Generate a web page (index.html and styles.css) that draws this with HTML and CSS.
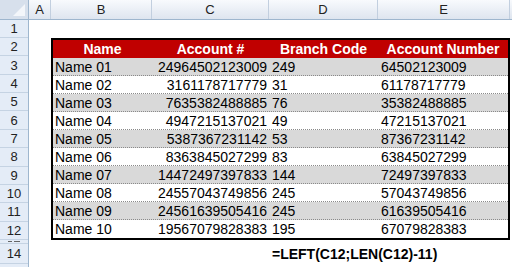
FILE: index.html
```html
<!DOCTYPE html>
<html lang="en">
<head>
    <meta charset="UTF-8">
    <meta name="viewport" content="width=device-width, initial-scale=1.0">
    <title>Account numbers - LEFT formula</title>
    <link rel="stylesheet" href="styles.css">
</head>
<body>
    <div class="sheet">
        <!-- Column headings -->
        <div class="col-heads">
            <div class="corner">
                <svg width="12" height="12" viewBox="0 0 12 12"><polygon points="12,0 12,12 0,12" fill="#f3f6fa"/></svg>
            </div>
            <div class="col-head col-a">A</div>
            <div class="col-head col-b">B</div>
            <div class="col-head col-c">C</div>
            <div class="col-head col-d">D</div>
            <div class="col-head col-e">E</div>
            <div class="col-head col-f"></div>
        </div>

        <div class="sheet-body">
            <!-- Row headings -->
            <div class="row-heads">
                <div class="row-head row-first">1</div>
                <div class="row-head">2</div>
                <div class="row-head">3</div>
                <div class="row-head">4</div>
                <div class="row-head">5</div>
                <div class="row-head">6</div>
                <div class="row-head">7</div>
                <div class="row-head">8</div>
                <div class="row-head">9</div>
                <div class="row-head">10</div>
                <div class="row-head">11</div>
                <div class="row-head">12</div>
                <!-- row 13 is hidden, only a sliver of its label shows -->
                <div class="row-head row-hidden"></div>
                <div class="row-head row-last">14</div>
                <div class="row-head row-rest"></div>
            </div>

            <div class="cells">
                <div class="blank-row"></div>

                <div class="accounts">
                    <div class="acc-row acc-head">
                        <div>Name</div>
                        <div>Account #</div>
                        <div>Branch Code</div>
                        <div>Account Number</div>
                    </div>
                    <div class="acc-row shaded">
                        <div class="name">Name 01</div>
                        <div class="acct">24964502123009</div>
                        <div class="branch">249</div>
                        <div class="number">64502123009</div>
                    </div>
                    <div class="acc-row">
                        <div class="name">Name 02</div>
                        <div class="acct">3161178717779</div>
                        <div class="branch">31</div>
                        <div class="number">61178717779</div>
                    </div>
                    <div class="acc-row shaded">
                        <div class="name">Name 03</div>
                        <div class="acct">7635382488885</div>
                        <div class="branch">76</div>
                        <div class="number">35382488885</div>
                    </div>
                    <div class="acc-row">
                        <div class="name">Name 04</div>
                        <div class="acct">4947215137021</div>
                        <div class="branch">49</div>
                        <div class="number">47215137021</div>
                    </div>
                    <div class="acc-row shaded">
                        <div class="name">Name 05</div>
                        <div class="acct">5387367231142</div>
                        <div class="branch">53</div>
                        <div class="number">87367231142</div>
                    </div>
                    <div class="acc-row">
                        <div class="name">Name 06</div>
                        <div class="acct">8363845027299</div>
                        <div class="branch">83</div>
                        <div class="number">63845027299</div>
                    </div>
                    <div class="acc-row shaded">
                        <div class="name">Name 07</div>
                        <div class="acct">14472497397833</div>
                        <div class="branch">144</div>
                        <div class="number">72497397833</div>
                    </div>
                    <div class="acc-row">
                        <div class="name">Name 08</div>
                        <div class="acct">24557043749856</div>
                        <div class="branch">245</div>
                        <div class="number">57043749856</div>
                    </div>
                    <div class="acc-row shaded">
                        <div class="name">Name 09</div>
                        <div class="acct">24561639505416</div>
                        <div class="branch">245</div>
                        <div class="number">61639505416</div>
                    </div>
                    <div class="acc-row">
                        <div class="name">Name 10</div>
                        <div class="acct">19567079828383</div>
                        <div class="branch">195</div>
                        <div class="number">67079828383</div>
                    </div>
                </div>

                <div class="hidden-row"></div>

                <div class="formula-row">
                    <span class="formula">=LEFT(C12;LEN(C12)-11)</span>
                </div>
            </div>
        </div>
    </div>
</body>
</html>
```

FILE: styles.css
```css
body {
    margin: 0;
    padding: 0;
    background-color: #fff;
    font-family: "Liberation Sans", Arial, sans-serif;
    color: #000;
    overflow: hidden;
}
.sheet {
    width: 512px;
    height: 267px;
    overflow: hidden;
}

/* Column headings */
.col-heads {
    display: flex;
    height: 20px;
    box-sizing: border-box;
    background: linear-gradient(#f8fafd, #dee5ef);
    border-bottom: 1px solid #9eb6ce;
}
.corner {
    width: 29px;
    flex: none;
    box-sizing: border-box;
    border-right: 1px solid #9eb6ce;
    background: #d7e0ec;
    display: flex;
    align-items: flex-end;
    justify-content: flex-end;
    padding: 0 3px 3px 0;
}
.corner svg {
    display: block;
}
.col-head {
    flex: none;
    box-sizing: border-box;
    border-right: 1px solid #c2cfdf;
    text-align: center;
    font-size: 13px;
    line-height: 19px;
    color: #222;
}
.col-a { width: 22px; }
.col-b { width: 101px; }
.col-c { width: 117px; }
.col-d { width: 109px; }
.col-e { width: 132px; }
.col-f { flex: 1; border-right: none; }

/* Row headings */
.sheet-body {
    display: flex;
}
.row-heads {
    width: 29px;
    flex: none;
    box-sizing: border-box;
    background-color: #e4ecf7;
    border-right: 1px solid #9eb6ce;
}
.row-head {
    height: calc(202px / 11);
    box-sizing: border-box;
    border-bottom: 1px solid #c5d3e3;
    display: flex;
    align-items: center;
    justify-content: center;
    font-size: 13px;
    color: #222;
    overflow: hidden;
}
.row-first { height: 18px; }
.row-hidden {
    height: 4px;
}
.row-hidden::before {
    content: "";
    width: 12px;
    height: 1px;
    background: linear-gradient(to right, #666 0 4px, transparent 4px 6px, #666 6px 12px);
}
.row-last { height: 20px; }
.row-rest { height: 20px; border-bottom: none; }

/* Cells */
.cells {
    flex: 1;
}
.blank-row {
    height: 18px;
}
.accounts {
    margin-left: 22px;
    width: 459px;
    height: 202px;
    box-sizing: border-box;
    border: 2px solid #000;
    font-size: 14px;
}
.acc-row {
    display: grid;
    grid-template-columns: 99px 117px 109px 130px;
    height: 18px;
    box-sizing: border-box;
    border-bottom: 1px dotted #8a8a8a;
    align-items: center;
    white-space: nowrap;
}
.acc-row:last-child {
    border-bottom: none;
}
.acc-row.shaded {
    background-color: #d9d9d9;
}
.acc-head {
    background-color: #c00000;
    color: #fff;
    font-weight: bold;
    text-align: center;
    border-bottom: none;
}
.name {
    padding-left: 2px;
}
.acct {
    text-align: right;
    padding-right: 2px;
}
.branch,
.number {
    padding-left: 3px;
}
.hidden-row {
    height: 4px;
}
.formula-row {
    height: 20px;
    display: grid;
    grid-template-columns: 22px 101px 117px 109px 132px;
    align-items: center;
}
.formula {
    grid-column: 4;
    padding-left: 3px;
    font-size: 14px;
    font-weight: bold;
    white-space: nowrap;
}
```
